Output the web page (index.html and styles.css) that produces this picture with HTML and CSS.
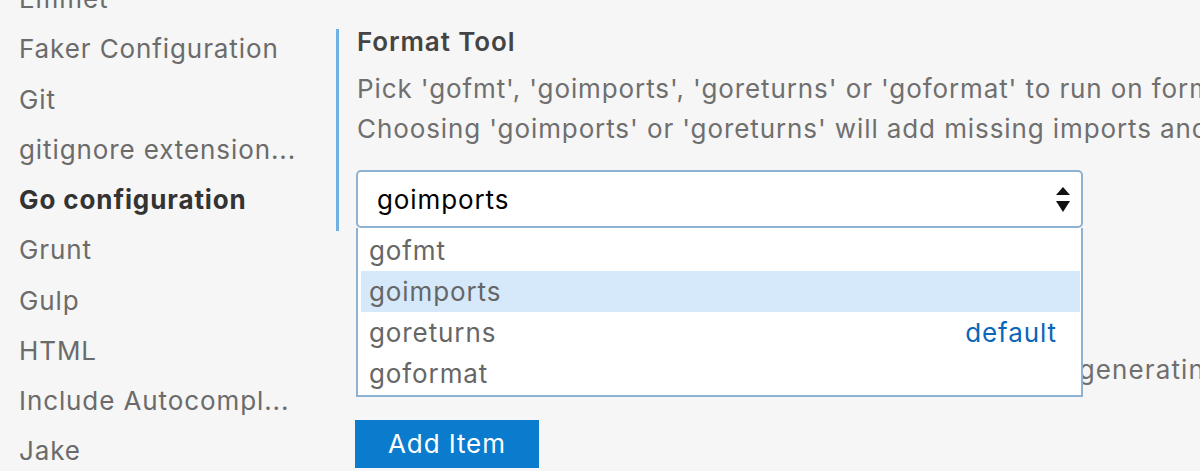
FILE: index.html
```html
<!DOCTYPE html>
<html>
<head>
<meta charset="utf-8">
<link rel="stylesheet" href="styles.css">
</head>
<body>
<div class="page">
  <nav class="toc">
    <div class="toc-item">Emmet</div>
    <div class="toc-item">Faker Configuration</div>
    <div class="toc-item">Git</div>
    <div class="toc-item">gitignore extension...</div>
    <div class="toc-item active">Go configuration</div>
    <div class="toc-item">Grunt</div>
    <div class="toc-item">Gulp</div>
    <div class="toc-item">HTML</div>
    <div class="toc-item">Include Autocompl...</div>
    <div class="toc-item">Jake</div>
  </nav>
  <main class="settings">
    <section class="setting focused">
      <div class="setting-title">Format Tool</div>
      <div class="setting-desc">
        <span class="line">Pick 'gofmt', 'goimports', 'goreturns' or 'goformat' to run on format.</span>
        <span class="line">Choosing 'goimports' or 'goreturns' will add missing imports and remove unused imports.</span>
      </div>
      <div class="select-wrap">
        <div class="select">
          <span class="select-value">goimports</span>
          <svg class="select-arrows" width="14" height="26" viewBox="0 0 14 26">
            <polygon points="7,0 14,8 0,8" fill="#111"/>
            <polygon points="0,14 14,14 7,25" fill="#111"/>
          </svg>
        </div>
        <ul class="dropdown">
          <li class="option">gofmt</li>
          <li class="option selected">goimports</li>
          <li class="option"><span>goreturns</span><span class="default-tag">default</span></li>
          <li class="option">goformat</li>
        </ul>
      </div>
    </section>
    <section class="setting next">
      <div class="setting-title">Generate Tests Flags</div>
      <div class="setting-desc second">
        <span class="line">Additional command line flags to pass to `gotests` for generating tests.</span>
      </div>
      <button class="add-btn">Add Item</button>
    </section>
  </main>
</div>
</body>
</html>
```
FILE: styles.css
```css
* { box-sizing: border-box; }
html, body {
  margin: 0;
  padding: 0;
  background: #f6f6f6;
  overflow: hidden;
}
body {
  width: 1200px;
  height: 471px;
  font-family: Inter, "Noto Sans", "Liberation Sans", sans-serif;
  font-size: 26px;
  letter-spacing: 0.9px;
}
.page {
  display: flex;
  align-items: flex-start;
  height: 471px;
  overflow: hidden;
}
.toc {
  width: 336px;
  flex: none;
  padding-left: 19px;
  margin-top: -26px;
}
.toc-item {
  height: 50.25px;
  line-height: 50.25px;
  color: #6b6b6b;
  white-space: nowrap;
}
.toc-item.active {
  color: #333;
  font-weight: 700;
}
.settings {
  flex: none;
  width: 864px;
  padding-top: 29px;
}
.setting {
  padding-left: 18px;
  border-left: 3px solid transparent;
}
.setting.focused {
  border-left-color: #6fb1e2;
  padding-bottom: 3px;
}
.setting-title {
  line-height: 26px;
  color: #444;
  font-weight: 600;
  white-space: nowrap;
}
.setting-desc {
  margin-top: 14px;
  color: #6f6f6f;
  line-height: 40px;
  white-space: nowrap;
}
.setting-desc .line { display: block; }
.select-wrap {
  position: relative;
  margin-top: 21px;
  margin-left: -1px;
  width: 727px;
}
.select {
  height: 58px;
  background: #fff;
  border: 2px solid #8db2d2;
  border-radius: 5px;
  display: flex;
  align-items: center;
  justify-content: space-between;
  padding: 0 11px 0 19px;
}
.select-value { color: #000; }
.select-arrows { display: block; margin-top: 2px; }
.dropdown {
  position: absolute;
  left: 0;
  top: 58px;
  width: 727px;
  margin: 0;
  list-style: none;
  padding: 2px 1px 1px 3px;
  background: #fff;
  border: 2px solid #8db2d2;
  border-top: none;
  z-index: 2;
}
.option {
  height: 41px;
  line-height: 41px;
  padding: 0 23px 0 8px;
  color: #666;
  display: flex;
  justify-content: space-between;
}
.option.selected { background: #d6e9fb; }
.default-tag { color: #0a66b8; }
.setting.next {
  margin-top: 69px;
}
.setting-desc.second {
  margin-top: 24px;
  letter-spacing: 1.1px;
}
.add-btn {
  display: block;
  margin-top: 30px;
  margin-left: -2px;
  height: 48px;
  padding: 0 33px;
  border: none;
  background: #0a7bcd;
  color: #fff;
  font-family: inherit;
  font-size: 26px;
  letter-spacing: 0.9px;
  line-height: 48px;
}
```
